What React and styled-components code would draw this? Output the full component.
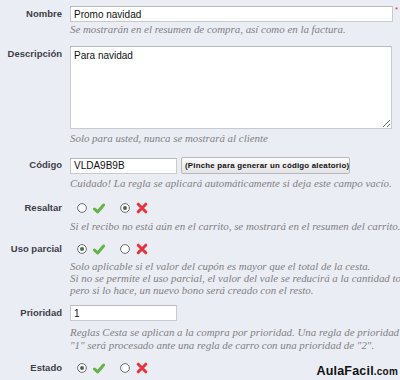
import React from 'react'
import styled, { createGlobalStyle } from 'styled-components'

const GlobalStyle = createGlobalStyle`
  html, body {
    margin: 0;
    padding: 0;
    background: #ebedf4;
    overflow: hidden;
  }
  body {
    width: 400px;
    height: 380px;
  }
`

const Page = styled.div`
  position: relative;
  width: 400px;
  height: 380px;
  overflow: hidden;
  padding-top: 6px;
  box-sizing: border-box;
  font-family: "Liberation Sans", Arial, sans-serif;
`

const Row = styled.div`
  display: grid;
  grid-template-columns: 62px 1fr;
  column-gap: 8px;
  margin-top: ${({ top = 0 }) => top}px;
`

const Label = styled.label`
  text-align: right;
  font-weight: bold;
  font-size: 9.5px;
  color: #3e3e48;
  line-height: ${({ h = 16 }) => h}px;
  white-space: nowrap;
`

const Field = styled.div`
  display: flex;
  flex-direction: column;
  min-width: 0;
`

const Line = styled.div`
  display: flex;
  align-items: center;
  gap: 4px;
  position: relative;
`

const TextInput = styled.input`
  box-sizing: border-box;
  width: ${({ w }) => w}px;
  height: 16px;
  margin: 0;
  padding: 0 3px;
  border: 1px solid #c9cad0;
  border-top-color: #b9bac0;
  background: #fff;
  font-family: "Liberation Sans", Arial, sans-serif;
  font-size: 10px;
  color: #111;
  outline: none;
`

const TextArea = styled.textarea`
  box-sizing: border-box;
  width: 322px;
  height: 83px;
  margin: 0;
  padding: 3px 3px;
  border: 1px solid #c9cad0;
  border-top-color: #b9bac0;
  background: #fff;
  font-family: "Liberation Sans", Arial, sans-serif;
  font-size: 10px;
  line-height: 12px;
  color: #111;
  resize: both;
  outline: none;
  display: block;
`

const Required = styled.sup`
  position: absolute;
  left: 325px;
  top: 0px;
  color: #c33;
  font-size: 8px;
  line-height: 8px;
`

const Button = styled.button`
  box-sizing: border-box;
  height: 17px;
  width: 169px;
  margin: 0;
  padding: 0 3px;
  border: 1px solid #b8b8bc;
  border-radius: 2px;
  background: linear-gradient(#fbfbfb, #e4e4e6);
  font-family: "Liberation Sans", Arial, sans-serif;
  font-weight: bold;
  font-size: 7.9px;
  letter-spacing: 0.2px;
  color: #111;
  white-space: nowrap;
`

const Help = styled.p`
  margin: ${({ mt = 3 }) => mt}px 0 0;
  font-family: "Liberation Serif", "Times New Roman", serif;
  font-style: italic;
  font-size: 10.9px;
  line-height: ${({ lh = 12 }) => lh}px;
  color: #7f7f84;
  white-space: nowrap;
`

const Choices = styled.div`
  display: flex;
  align-items: center;
  height: 14px;
  padding-left: 7px;
`

const Choice = styled.span`
  display: inline-flex;
  align-items: center;
  gap: 6px;
  margin-right: 15px;
`

const Watermark = styled.div`
  position: absolute;
  right: 2px;
  bottom: 2px;
  font-family: "Liberation Sans", Arial, sans-serif;
  font-weight: bold;
  font-size: 12.5px;
  color: #111;
  letter-spacing: 0.2px;
  span {
    font-size: 10px;
  }
`

const Radio = ({ checked }) => (
  <svg width="10" height="10" viewBox="0 0 10 10">
    <circle cx="5" cy="5" r="4.4" fill="#fff" stroke="#6a6c74" strokeWidth="1" />
    {checked && <circle cx="5" cy="5" r="2" fill="#4d6a50" />}
  </svg>
)

const Check = () => (
  <svg width="12" height="11" viewBox="0 0 12 11">
    <path d="M1.5 6 L4.6 9 L10.6 2" fill="none" stroke="#62b446" strokeWidth="3" strokeLinecap="round" strokeLinejoin="round" />
  </svg>
)

const Cross = () => (
  <svg width="12" height="12" viewBox="0 0 12 12">
    <path d="M2.2 2.2 L9.8 9.8 M9.8 2.2 L2.2 9.8" fill="none" stroke="#e5343c" strokeWidth="3" strokeLinecap="round" />
  </svg>
)

const YesNo = ({ yes }) => (
  <Choices>
    <Choice><Radio checked={ yes } /><Check /></Choice>
    <Choice><Radio checked={ !yes } /><Cross /></Choice>
  </Choices>
)

export default function App() {
  return (
    <Page>
      <GlobalStyle />

      <Row>
        <Label>Nombre</Label>
        <Field>
          <Line>
            <TextInput w={ 323 } defaultValue="Promo navidad" />
            <Required>*</Required>
          </Line>
          <Help mt={ 1 }>Se mostrarán en el resumen de compra, así como en la factura.</Help>
        </Field>
      </Row>

      <Row top={ 11 }>
        <Label>Descripción</Label>
        <Field>
          <TextArea defaultValue="Para navidad" />
          <Help mt={ 3 }>Solo para usted, nunca se mostrará al cliente</Help>
        </Field>
      </Row>

      <Row top={ 13 }>
        <Label>Código</Label>
        <Field>
          <Line>
            <TextInput w={ 107 } defaultValue="VLDA9B9B" />
            <Button>(Pinche para generar un código aleatorio)</Button>
          </Line>
          <Help mt={ 3 }>Cuidado! La regla se aplicará automáticamente si deja este campo vacío.</Help>
        </Field>
      </Row>

      <Row top={ 12 }>
        <Label h={ 14 }>Resaltar</Label>
        <Field>
          <YesNo yes={ false } />
          <Help mt={ 5 }>Si el recibo no está aún en el carrito, se mostrará en el resumen del carrito.</Help>
        </Field>
      </Row>

      <Row top={ 10 }>
        <Label h={ 14 }>Uso parcial</Label>
        <Field>
          <YesNo yes={ true } />
          <Help mt={ 4 }>
            Solo aplicable si el valor del cupón es mayor que el total de la cesta.<br />
            Si no se permite el uso parcial, el valor del vale se reducirá a la cantidad total del carrito.<br />
            pero si lo hace, un nuevo bono será creado con el resto.
          </Help>
        </Field>
      </Row>

      <Row top={ 9 }>
        <Label>Prioridad</Label>
        <Field>
          <TextInput w={ 107 } defaultValue="1" />
          <Help mt={ 5 } lh={ 13 }>
            Reglas Cesta se aplican a la compra por prioridad. Una regla de prioridad de<br />
            "1" será procesado ante una regla de carro con una prioridad de "2".
          </Help>
        </Field>
      </Row>

      <Row top={ 9 }>
        <Label h={ 14 }>Estado</Label>
        <Field>
          <YesNo yes={ true } />
        </Field>
      </Row>

      <Watermark>AulaFacil<span>.com</span></Watermark>
    </Page>
  )
}
